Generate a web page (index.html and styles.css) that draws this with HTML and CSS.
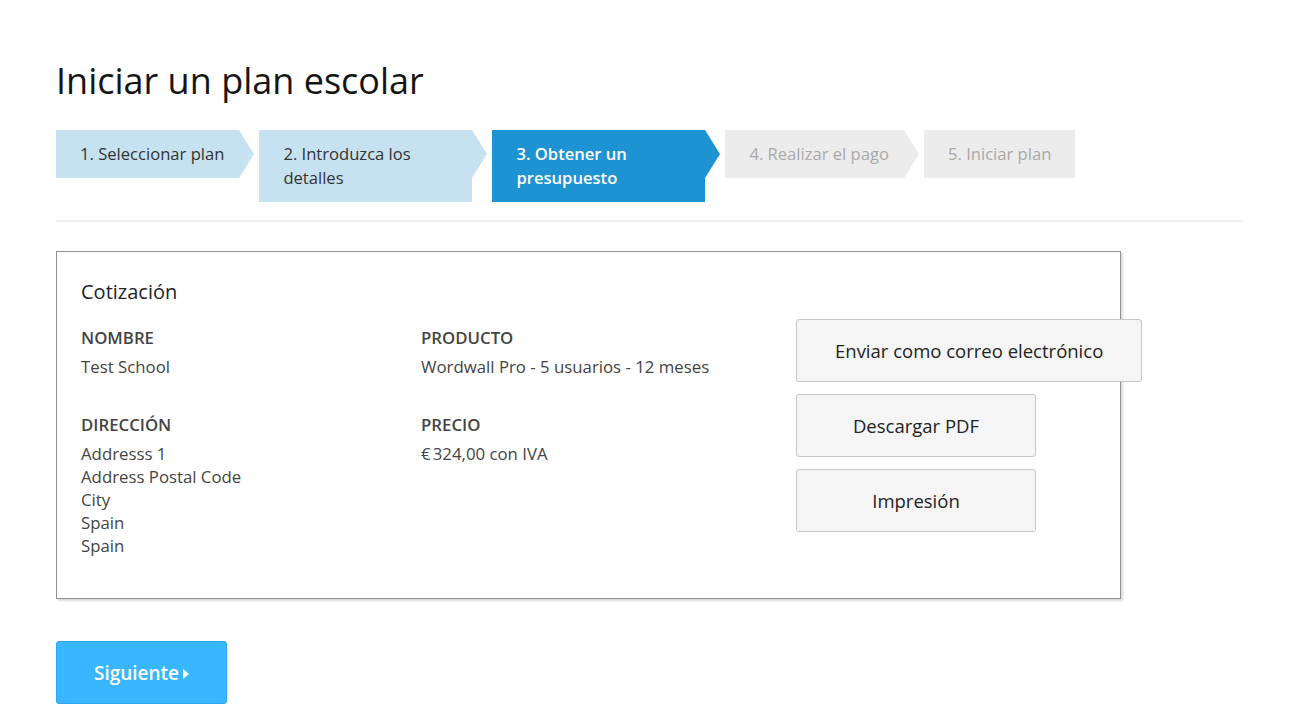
FILE: index.html
```html
<!DOCTYPE html>
<html lang="es">
<head>
  <meta charset="UTF-8">
  <meta name="viewport" content="width=device-width, initial-scale=1.0">
  <title>Iniciar un plan escolar</title>
  <link rel="stylesheet" href="styles.css">
</head>
<body>

<div class="page">
  <h1 class="page-title">Iniciar un plan escolar</h1>

  <ol class="steps">
    <li class="step done">1. Seleccionar plan</li>
    <li class="step done">2. Introduzca los detalles</li>
    <li class="step active">3. Obtener un presupuesto</li>
    <li class="step pending">4. Realizar el pago</li>
    <li class="step pending last">5. Iniciar plan</li>
  </ol>

  <hr class="divider">

  <div class="quote">
    <h2 class="quote-title">Cotización</h2>

    <div class="quote-grid">
      <div class="quote-col">
        <div class="field">
          <div class="field-label">NOMBRE</div>
          <div class="field-value">Test School</div>
        </div>
        <div class="field">
          <div class="field-label">DIRECCIÓN</div>
          <div class="field-value">
            Addresss 1<br>
            Address Postal Code<br>
            City<br>
            Spain<br>
            Spain
          </div>
        </div>
      </div>

      <div class="quote-col">
        <div class="field">
          <div class="field-label">PRODUCTO</div>
          <div class="field-value">Wordwall Pro - 5 usuarios - 12 meses</div>
        </div>
        <div class="field">
          <div class="field-label">PRECIO</div>
          <div class="field-value">€&#8239;324,00 con IVA</div>
        </div>
      </div>

      <div class="quote-actions">
        <button class="action-btn">Enviar como correo electrónico</button>
        <button class="action-btn">Descargar PDF</button>
        <button class="action-btn">Impresión</button>
      </div>
    </div>
  </div>

  <button class="next-btn">Siguiente<span class="caret"></span></button>
</div>

</body>
</html>
```

FILE: styles.css
```css
body {
  margin: 0;
  background-color: #fff;
  font-family: "Open Sans", Arial, sans-serif;
  color: #333;
}

.page {
  margin: 0 57px 0 56px;
}

.page-title {
  font-size: 36px;
  font-weight: 400;
  line-height: 40px;
  color: #151515;
  margin: 61px 0 29px;
}

.steps {
  display: flex;
  align-items: flex-start;
  gap: 20px;
  list-style: none;
  margin: 0;
  padding: 0;
}

.step {
  position: relative;
  box-sizing: border-box;
  max-width: 213px;
  padding: 12px 15px 12px 24px;
  font-size: 16.6px;
  line-height: 24px;
}

.step::after {
  content: "";
  position: absolute;
  left: 100%;
  top: 0;
  border-top: 24px solid transparent;
  border-bottom: 24px solid transparent;
  border-left: 15px solid transparent;
}

.step.last {
  padding-right: 24px;
}

.step.last::after {
  display: none;
}

.step.done {
  background-color: #c6e2f1;
  color: #333;
}

.step.done::after {
  border-left-color: #c6e2f1;
}

.step.active {
  background-color: #1e93d4;
  color: #fff;
  font-weight: 600;
}

.step.active::after {
  border-left-color: #1e93d4;
}

.step.pending {
  background-color: #ececec;
  color: #a9a9a9;
}

.step.pending::after {
  border-left-color: #ececec;
}

.divider {
  border: none;
  border-top: 2px solid #efefef;
  margin: 18px 0 29px;
}

.quote {
  width: 1065px;
  box-sizing: border-box;
  border: 1px solid #939393;
  box-shadow: 2px 2px 2px rgba(0, 0, 0, 0.15);
  padding: 26px 24px 41px;
}

.quote-title {
  font-size: 20px;
  font-weight: 400;
  line-height: 28px;
  color: #222;
  margin: 0 0 20px;
}

.quote-grid {
  display: grid;
  grid-template-columns: 340px 375px minmax(0, 1fr);
}

.quote-col {
  display: flex;
  flex-direction: column;
  gap: 35px;
}

.field-label {
  font-size: 16.8px;
  font-weight: 600;
  line-height: 23px;
  color: #444;
  margin-bottom: 6px;
}

.field-value {
  font-size: 16.8px;
  line-height: 23px;
  color: #444;
}

.quote-actions {
  display: flex;
  flex-direction: column;
  align-items: flex-start;
  gap: 12px;
  margin-top: -7px;
}

.action-btn {
  min-width: 240px;
  padding: 17px 38px;
  background-color: #f5f5f5;
  border: 1px solid #c6c6c6;
  border-radius: 3px;
  font-family: "Open Sans", Arial, sans-serif;
  font-size: 18.5px;
  line-height: 27px;
  color: #222;
  white-space: nowrap;
  cursor: pointer;
}

.next-btn {
  margin-top: 42px;
  width: 171px;
  height: 63px;
  background-color: #38b6ff;
  border: 1px solid #2ea6ec;
  border-radius: 3px;
  color: #fff;
  font-family: "Open Sans", Arial, sans-serif;
  font-size: 19px;
  font-weight: 600;
  cursor: pointer;
}

.caret {
  display: inline-block;
  margin-left: 4px;
  border-left: 6px solid #fff;
  border-top: 5px solid transparent;
  border-bottom: 5px solid transparent;
  vertical-align: 1px;
}
```
